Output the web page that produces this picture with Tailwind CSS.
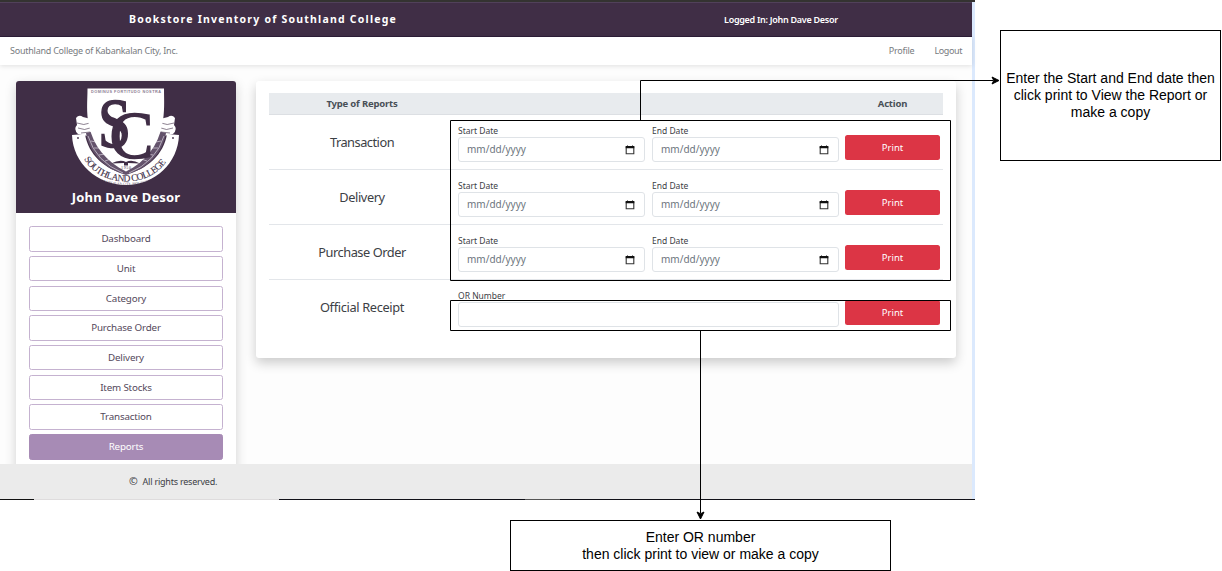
<!DOCTYPE html>
<html lang="en">
<head>
<meta charset="utf-8">
<title>Bookstore Inventory of Southland College</title>
<script src="https://cdn.jsdelivr.net/npm/@tailwindcss/browser@4"></script>
</head>
<body class="relative h-[571px] w-[1222px] overflow-hidden bg-white font-['Noto_Sans',sans-serif] text-[#3c4045]">
<svg class="hidden">
  <symbol id="cal" viewBox="0 0 10 10"><path d="M1.200 2h7.600v6.800H1.200z" fill="#fff" stroke="#333" stroke-width="1.100"/><path d="M.7 1h8.600v2.200H.7zM2 .4h1v1H2zM7 .4h1v1H7z" fill="#111"/></symbol>
</svg>
<div class="flex h-[500px] w-[975px] flex-col bg-[#dbe9fd]">
  <div class="h-0.5 shrink-0 bg-[#343331]"></div>
  <div class="flex w-[972px] grow flex-col bg-[#fdfdfd]">
    <header class="flex h-[35px] shrink-0 items-center border-t border-b border-t-[#51415a] border-b-[#2d1d38] bg-[#402e46] pl-[129px] text-white">
      <h1 class="w-[595px] text-[10.5px] font-bold tracking-[1.22px]">Bookstore Inventory of Southland College</h1>
      <div class="text-[9px] font-semibold tracking-[-0.28px]">Logged In: John Dave Desor</div>
    </header>
    <nav class="flex h-7 shrink-0 items-center bg-white pr-[10px] pl-[10px] text-[9px] tracking-[-0.24px] text-[#777b80] shadow-[0_1px_5px_rgba(0,0,0,0.12)]">
      <div class="grow">Southland College of Kabankalan City, Inc.</div>
      <div class="mr-5">Profile</div>
      <div class="tracking-[-0.4px]">Logout</div>
    </nav>
    <main class="flex h-[399px] shrink-0 items-start gap-5 overflow-hidden px-4 pt-4">
      <aside class="h-[400px] w-[220px] shrink-0 rounded-t-[3px] bg-white shadow-[0_4px_12px_rgba(0,0,0,0.18)]">
        <div class="flex h-[132px] flex-col items-center rounded-t-[3px] bg-[#402e46] pt-[5px]">
          <svg class="h-[102px] w-[112px] shrink-0" viewBox="70 86 112 102">
            <g fill="#fff">
              <path d="M76 118q3-4 7-1l8 2 1 18-14-3q-5-5-1-9z"/>
              <path d="M175 118q-3-4-7-1l-8 2-1 18 14-3q5-5 1-9z"/>
              <path d="M72 135l13-1c3 20 20 36 41 40 21-4 38-20 41-40l12 1c-1 28-24 50-53 50s-53-22-54-50z"/>
            </g>
            <g fill="none" stroke="#402e46" stroke-width=".6"><path d="M77 123q7 3 13 0M78 128q7 3 12 0M81 133l9-1M174 123q-7 3-13 0M173 128q-7 3-12 0M170 133l-9-1"/></g>
            <path d="M86 133c3 20 19 36 40 42 21-6 37-22 40-42l-8-2-32 36-32-36z" fill="#64536c"/>
            <g fill="none" stroke="#d8d1dc" stroke-width=".7"><path d="M88 136q8 26 35 37M91 141l5 1M94 148l6 0M99 155l6-1M105 161l6-2M164 136q-8 26-35 37M161 141l-5 1M158 148l-6 0M153 155l-6-1M147 161l-6-2"/></g>
            <path d="M87.500 88.500h76.500c0 12 1 24-2 37-4 20-16 36-36 46-20-10-33-26-37-46-3-13-1.500-25-1.500-37z" fill="#fff"/>
            <text x="91" y="93.200" font-family="Liberation Sans, sans-serif" font-size="3.800" font-weight="bold" fill="#8b7d91" textLength="70">DOMINUS FORTITUDO NOSTRA</text>
            <g font-family="Liberation Serif, serif" fill="#402e46" stroke="#402e46">
              <text x="98" y="147" font-size="69" stroke-width="1.600" textLength="33" lengthAdjust="spacingAndGlyphs">S</text>
              <text x="109.500" y="157.500" font-size="68" stroke-width="1.500" textLength="44" lengthAdjust="spacingAndGlyphs">C</text>
            </g>
            <path d="M111 163.500q9-4.500 15-1.500 6-3 14 1.500l-12-.5v2.500h-4v-2.500z" fill="#402e46"/>
            <text x="121" y="168.500" font-family="Liberation Serif, serif" font-size="4" fill="#402e46" textLength="10">1950</text>
            <circle cx="78" cy="138" r=".9" fill="#402e46"/><circle cx="173" cy="138" r=".9" fill="#402e46"/>
            <path id="band" d="M84 159c17 30 67 30 84 0" fill="none"/>
            <path id="band2" d="M96 179.500c18 7 42 7 60 0" fill="none"/>
            <text font-family="Liberation Serif, serif" font-size="9.600" fill="#402e46" stroke="#402e46" stroke-width=".1"><textPath href="#band" textLength="96">SOUTHLAND COLLEGE</textPath></text>
            <text font-family="Liberation Serif, serif" font-size="3" fill="#402e46"><textPath href="#band2" startOffset="3" textLength="54">KABANKALAN CITY, PHILIPPINES</textPath></text>
          </svg>
          <div class="mt-px text-[13px] leading-[16px] font-bold tracking-[0.13px] text-white">John Dave Desor</div>
        </div>
        <ul class="flex flex-col gap-[4.200px] px-[13px] pt-[13.200px] text-center text-[9.800px] leading-[23.500px] tracking-[-0.17px] text-[#54485b]">
          <li class="rounded-[2.500px] border border-[#c5b2d0]">Dashboard</li>
          <li class="rounded-[2.500px] border border-[#c5b2d0]">Unit</li>
          <li class="rounded-[2.500px] border border-[#c5b2d0]">Category</li>
          <li class="rounded-[2.500px] border border-[#c5b2d0]">Purchase Order</li>
          <li class="rounded-[2.500px] border border-[#c5b2d0]">Delivery</li>
          <li class="rounded-[2.500px] border border-[#c5b2d0]">Item Stocks</li>
          <li class="rounded-[2.500px] border border-[#c5b2d0]">Transaction</li>
          <li class="rounded-[2.500px] border border-[#a78bb5] bg-[#a78bb5] text-white">Reports</li>
        </ul>
      </aside>
      <section class="h-[277px] w-[700px] shrink-0 rounded-[3px] bg-white px-[13px] pt-3 shadow-[0_5px_12px_rgba(0,0,0,0.2)]">
        <div class="flex h-[22px] items-center border-b border-[#dcdfe3] bg-[#e8ebee] pt-px text-center text-[9.500px] font-bold tracking-[-0.18px] text-[#495057]">
          <div class="w-[186px]">Type of Reports</div><div class="grow"></div><div class="w-[101px]">Action</div>
        </div>
        <div class="flex h-[55px] border-b border-[#e3e6ea]">
          <div class="w-[189px] pr-[3px] pt-[18px] text-center text-[12.800px] leading-[18px] tracking-[-0.5px]">Transaction</div>
          <div class="w-[187px] pt-[9px] text-[8.500px] leading-[13px]">Start Date<div class="flex h-[25px] items-center justify-between rounded-[3px] border border-[#dfe3e7] pr-[9px] pl-2 text-[10px] text-[#6c757d]"><span>mm/dd/yyyy</span><svg class="size-[10px]"><use href="#cal"/></svg></div></div>
          <div class="ml-[7px] w-[187px] pt-[9px] text-[8.500px] leading-[13px]">End Date<div class="flex h-[25px] items-center justify-between rounded-[3px] border border-[#dfe3e7] pr-[9px] pl-2 text-[10px] text-[#6c757d]"><span>mm/dd/yyyy</span><svg class="size-[10px]"><use href="#cal"/></svg></div></div>
          <div class="mt-5 ml-[6px] h-[25px] w-[95px] rounded-[2.500px] bg-[#dc3545] text-center text-[9.500px] leading-[25px] text-white">Print</div>
        </div>
        <div class="flex h-[55px] border-b border-[#e3e6ea]">
          <div class="w-[189px] pr-[3px] pt-[18px] text-center text-[12.800px] leading-[18px] tracking-[-0.4px]">Delivery</div>
          <div class="w-[187px] pt-[9px] text-[8.500px] leading-[13px]">Start Date<div class="flex h-[25px] items-center justify-between rounded-[3px] border border-[#dfe3e7] pr-[9px] pl-2 text-[10px] text-[#6c757d]"><span>mm/dd/yyyy</span><svg class="size-[10px]"><use href="#cal"/></svg></div></div>
          <div class="ml-[7px] w-[187px] pt-[9px] text-[8.500px] leading-[13px]">End Date<div class="flex h-[25px] items-center justify-between rounded-[3px] border border-[#dfe3e7] pr-[9px] pl-2 text-[10px] text-[#6c757d]"><span>mm/dd/yyyy</span><svg class="size-[10px]"><use href="#cal"/></svg></div></div>
          <div class="mt-5 ml-[6px] h-[25px] w-[95px] rounded-[2.500px] bg-[#dc3545] text-center text-[9.500px] leading-[25px] text-white">Print</div>
        </div>
        <div class="flex h-[55px] border-b border-[#e3e6ea]">
          <div class="w-[189px] pr-[3px] pt-[18px] text-center text-[12.800px] leading-[18px] tracking-[-0.45px]">Purchase Order</div>
          <div class="w-[187px] pt-[9px] text-[8.500px] leading-[13px]">Start Date<div class="flex h-[25px] items-center justify-between rounded-[3px] border border-[#dfe3e7] pr-[9px] pl-2 text-[10px] text-[#6c757d]"><span>mm/dd/yyyy</span><svg class="size-[10px]"><use href="#cal"/></svg></div></div>
          <div class="ml-[7px] w-[187px] pt-[9px] text-[8.500px] leading-[13px]">End Date<div class="flex h-[25px] items-center justify-between rounded-[3px] border border-[#dfe3e7] pr-[9px] pl-2 text-[10px] text-[#6c757d]"><span>mm/dd/yyyy</span><svg class="size-[10px]"><use href="#cal"/></svg></div></div>
          <div class="mt-5 ml-[6px] h-[25px] w-[95px] rounded-[2.500px] bg-[#dc3545] text-center text-[9.500px] leading-[25px] text-white">Print</div>
        </div>
        <div class="flex h-[55px]">
          <div class="w-[189px] pr-[3px] pt-[18px] text-center text-[12.800px] leading-[18px] tracking-[-0.35px]">Official Receipt</div>
          <div class="w-[381px] pt-[9px] text-[8.500px] leading-[13px]">OR Number<div class="h-[25px] rounded-[3px] border border-[#dfe3e7]"></div></div>
          <div class="mt-5 ml-[6px] h-[25px] w-[95px] rounded-[2.500px] bg-[#dc3545] text-center text-[9.500px] leading-[25px] text-white">Print</div>
        </div>
      </section>
    </main>
    <footer class="flex grow items-center bg-[#ebebeb] pl-[129px] text-[9px] tracking-[-0.22px]"><span class="mr-[5px] text-[10.500px]">©</span>All rights reserved.</footer>
  </div>
  <div class="flex h-px shrink-0"><div class="w-[34px] bg-[#111]"></div><div class="w-[245px] bg-[#dedcdd]"></div><div class="w-[246px] bg-[#111118]"></div><div class="w-[35px] bg-[#555]"></div><div class="grow bg-[#111118]"></div></div>
</div>
<svg class="absolute inset-0 h-[571px] w-[1222px]" fill="none" stroke="#000" stroke-width="1">
  <path d="M450.500 120.500h500v160h-500zM450.500 300.500h500v30h-500zM640.500 120.500v-40h353M700.500 330.500v183"/>
  <path d="M999 80.500l-7-3.500 1.750 3.500L992 84zM700.500 519l-3.500-7 3.500 1.750L704 512z" fill="#000"/>
</svg>
<div class="absolute top-[30px] left-[1000px] flex h-[131px] w-[221px] items-center justify-center border border-black text-center font-['Liberation_Sans',sans-serif] text-[14px] leading-[17px] text-black">Enter the Start and End date then<br>click print to View the Report or<br>make a copy</div>
<div class="absolute top-[520px] left-[510px] flex h-[51px] w-[381px] items-center justify-center border border-black text-center font-['Liberation_Sans',sans-serif] text-[14px] leading-[17px] text-black">Enter OR number<br>then click print to view or make a copy</div>
</body>
</html>
